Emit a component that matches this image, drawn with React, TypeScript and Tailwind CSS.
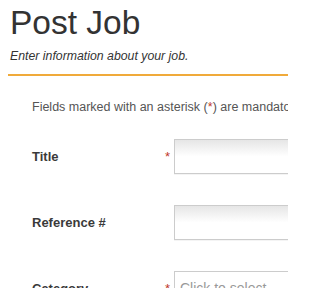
import React from 'react';

const Field = ({ label, required, children }: { label: string; required?: boolean; children: React.ReactNode }) => (
  <div className="flex items-center">
    <div className="flex w-[142px] shrink-0 items-center justify-between pr-[4px]">
      <span className="text-[13px] font-bold text-[#3a3a3a]">{label}</span>
      {required && <span className="text-[13px] text-[#c0392b]">*</span>}
    </div>
    {children}
  </div>
);

const TextBox = () => (
  <div className="h-[35px] w-[200px] shrink-0 border border-[#ccc] bg-linear-to-b from-[#e6e6e6] to-white to-50% shadow-[0_1px_0_#f4f4f4]" />
);

export default function App() {
  return (
    <div className="h-[288px] w-[288px] overflow-hidden bg-white font-['Liberation_Sans',Arial,sans-serif]">
      <div className="pl-[10px]">
        <h1 className="pt-[3px] text-[33.5px] leading-[40px] text-[#333]">Post Job</h1>
        <p className="mt-[5px] text-[12.3px] italic leading-[16px] text-[#333]">Enter information about your job.</p>
        <div className="-ml-[2px] mt-[10px] h-[2px] bg-[#f0aa3a]" />
      </div>
      <div className="pl-[32px]">
        <p className="mt-[23px] whitespace-nowrap text-[12.5px] leading-[16px] text-[#555]">
          Fields marked with an asterisk (<span className="text-[#c0392b]">*</span>) are mandatory.
        </p>
        <div className="mt-[24px] flex flex-col gap-[31px]">
          <Field label="Title" required>
            <TextBox />
          </Field>
          <Field label="Reference #">
            <TextBox />
          </Field>
          <Field label="Category" required>
            <div className="flex h-[35px] w-[200px] shrink-0 items-center border border-[#ccc] bg-white pl-[5px] text-[14px] text-[#999]">
              Click to select
            </div>
          </Field>
        </div>
      </div>
    </div>
  );
}
